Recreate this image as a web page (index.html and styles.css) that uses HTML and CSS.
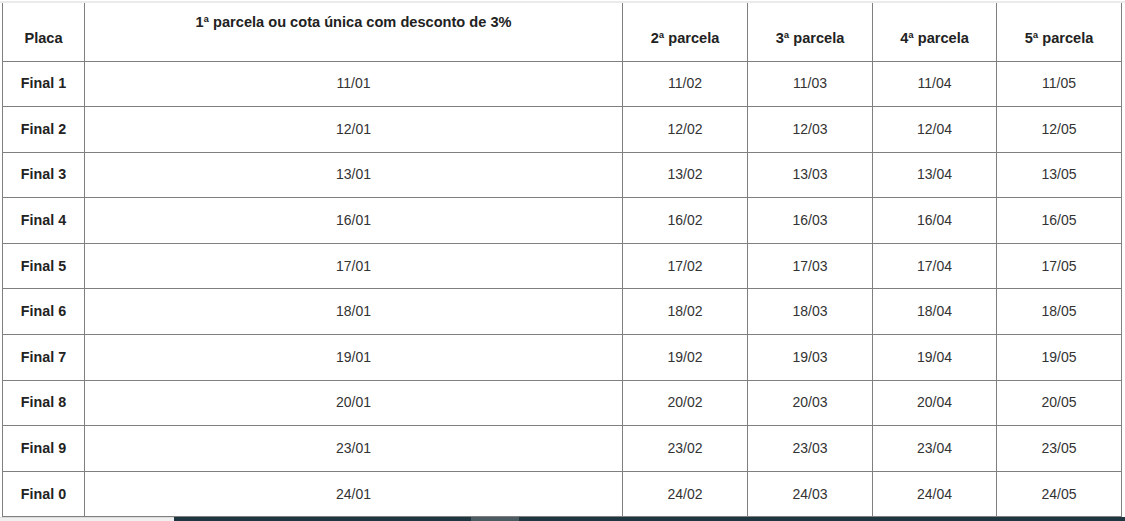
FILE: index.html
```html
<!DOCTYPE html>
<html lang="pt-BR">
<head>
<meta charset="utf-8">
<title>Calendário IPVA</title>
<link rel="stylesheet" href="styles.css">
</head>
<body>
<div class="topline"></div>
<table class="cal">
  <colgroup>
    <col class="c-placa">
    <col class="c-first">
    <col class="c-p">
    <col class="c-p">
    <col class="c-p4">
    <col class="c-p">
  </colgroup>
  <thead>
    <tr>
      <th class="h-bottom">Placa</th>
      <th class="h-top">1ª parcela ou cota única com desconto de 3%</th>
      <th class="h-bottom">2ª parcela</th>
      <th class="h-bottom">3ª parcela</th>
      <th class="h-bottom">4ª parcela</th>
      <th class="h-bottom">5ª parcela</th>
    </tr>
  </thead>
  <tbody>
    <tr><th>Final 1</th><td>11/01</td><td>11/02</td><td>11/03</td><td>11/04</td><td>11/05</td></tr>
    <tr><th>Final 2</th><td>12/01</td><td>12/02</td><td>12/03</td><td>12/04</td><td>12/05</td></tr>
    <tr><th>Final 3</th><td>13/01</td><td>13/02</td><td>13/03</td><td>13/04</td><td>13/05</td></tr>
    <tr><th>Final 4</th><td>16/01</td><td>16/02</td><td>16/03</td><td>16/04</td><td>16/05</td></tr>
    <tr><th>Final 5</th><td>17/01</td><td>17/02</td><td>17/03</td><td>17/04</td><td>17/05</td></tr>
    <tr><th>Final 6</th><td>18/01</td><td>18/02</td><td>18/03</td><td>18/04</td><td>18/05</td></tr>
    <tr><th>Final 7</th><td>19/01</td><td>19/02</td><td>19/03</td><td>19/04</td><td>19/05</td></tr>
    <tr><th>Final 8</th><td>20/01</td><td>20/02</td><td>20/03</td><td>20/04</td><td>20/05</td></tr>
    <tr><th>Final 9</th><td>23/01</td><td>23/02</td><td>23/03</td><td>23/04</td><td>23/05</td></tr>
    <tr><th>Final 0</th><td>24/01</td><td>24/02</td><td>24/03</td><td>24/04</td><td>24/05</td></tr>
  </tbody>
</table>
<div class="bottombar">
  <div class="bb-light"></div>
  <div class="bb-dark"></div>
  <div class="bb-thumb"></div>
  <div class="bb-dark bb-rest"></div>
</div>
</body>
</html>
```
FILE: styles.css
```css
html, body {
  margin: 0;
  padding: 0;
  background: #ffffff;
  overflow: hidden;
}
body {
  width: 1125px;
  height: 521px;
  font-family: "Liberation Sans", Arial, sans-serif;
  font-size: 14px;
  color: #333333;
  position: relative;
}
.topline {
  margin-top: 1px;
  height: 2px;
  background: #ebebeb;
}
.cal {
  margin-left: 2px;
  width: 1120px;
  border-collapse: collapse;
  table-layout: fixed;
  border-left: 1px solid #808080;
  border-right: 1px solid #808080;
}
.c-placa { width: 82px; }
.c-first { width: 538px; }
.c-p { width: 125px; }
.c-p4 { width: 124px; }
.cal th, .cal td {
  border-left: 1px solid #808080;
  border-right: 1px solid #808080;
  border-bottom: 1px solid #808080;
  padding: 0;
  text-align: center;
  vertical-align: middle;
  line-height: 17px;
}
.cal th {
  font-weight: bold;
  color: #222222;
  font-size: 14.3px;
}
.cal thead th {
  font-size: 14.6px;
}
.cal thead tr {
  height: 58px;
}
.cal th.h-bottom {
  vertical-align: bottom;
  padding-bottom: 14px;
}
.cal th.h-top {
  vertical-align: top;
  padding-top: 11px;
}
.cal tbody tr {
  height: 45.6px;
}
.bottombar {
  position: absolute;
  left: 0;
  right: 0;
  top: 517px;
  height: 4px;
  display: flex;
}
.bb-light {
  width: 174px;
  background: #f0f0f0;
  border-top: 1px solid #dcdcdc;
  box-sizing: border-box;
}
.bb-dark {
  width: 297px;
  background: #1f3540;
}
.bb-thumb {
  width: 48px;
  background: #4d5b63;
}
.bb-rest {
  flex: 1;
  width: auto;
}
```
